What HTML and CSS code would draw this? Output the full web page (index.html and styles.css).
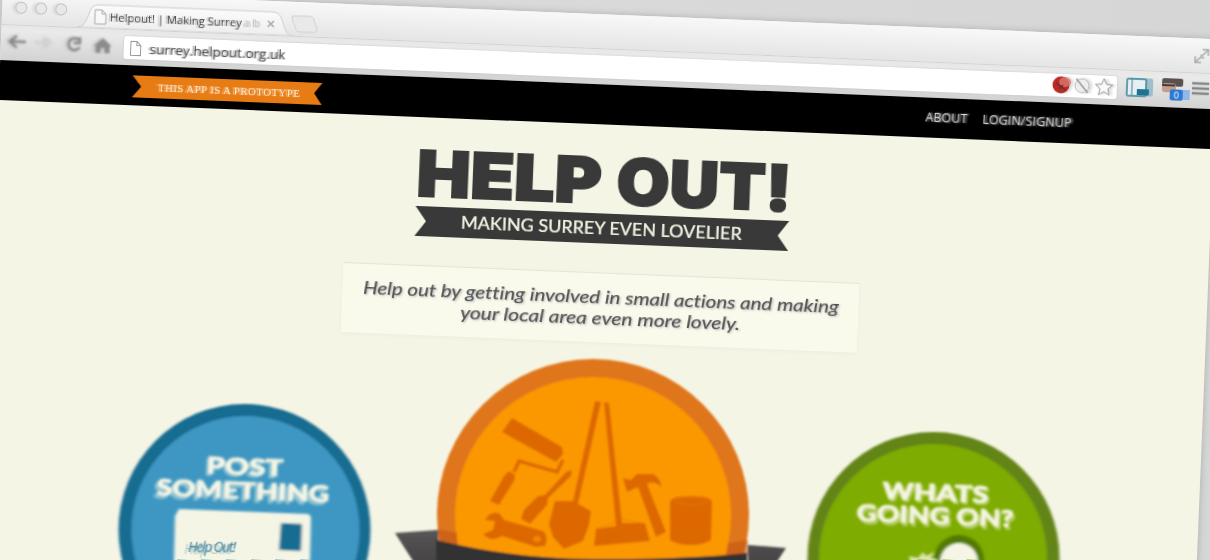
FILE: index.html
```html
<!DOCTYPE html>
<html lang="en">
<head>
<meta charset="utf-8">
<title>Helpout! | Making Surrey a better place</title>
<link rel="stylesheet" href="styles.css">
</head>
<body>
<div class="viewport">
<div class="window">
  <div class="tabs">
    <div class="lights"><i></i><i></i><i></i></div>
    <svg class="tab-shape" width="244" height="34" viewBox="0 0 244 34">
      <defs><linearGradient id="tab" x2="0" y2="1"><stop offset="0" stop-color="#fbfbfb"/><stop offset="1" stop-color="#eee"/></linearGradient></defs>
      <path d="M0 34Q6 33 8 28L13 15Q15 11 20 11H194Q200 11 203 16L208 29Q210 34 216 34Z" fill="url(#tab)" stroke="#cecece"/>
      <path d="M17 16h7l4 4v10H17zM24 16v4h4" fill="#f8f8f8" stroke="#aaa"/>
      <text class="tab-title" x="32" y="27" textLength="132">Helpout! | Making Surrey</text>
      <text class="tab-title faded" x="167" y="27" textLength="16">a b</text>
      <path d="M190 20l6 6m0-6l-6 6" stroke="#aaa" stroke-width="1.7"/>
      <path d="M216 14H232Q235 14 236 17L239 26Q240 30 236 30H222Q219 30 218 27L214 17Q213 14 216 14Z" fill="#e9e9e9" stroke="#d0d0d0"/>
    </svg>
    <svg class="expand" width="18" height="18" viewBox="0 0 18 18"><path d="M2 10v6h6M8 8v3h3M9 3h6v6M14 4L9 9M3 15l4-4" fill="none" stroke="#aaa" stroke-width="1.5"/></svg>
  </div>
  <div class="toolbar">
    <svg class="controls" width="123" height="35" viewBox="0 0 123 35">
      <g fill="none" stroke-width="2.5">
        <path d="M25 16H10M16 10l-7 6 7 6" stroke="#888"/>
        <path d="M37 16h13M45 11l6 5-6 5" stroke="#d6d6d6"/>
        <path d="M78 12a6 6 0 1 0 1 7M79 9v6h-6" stroke="#888"/>
      </g>
      <path d="M93 17l9-8 9 8h-2v7h-5v-5h-4v5h-5v-7z" fill="#8c8c8c"/>
    </svg>
    <div class="address">
      <svg width="12" height="16" viewBox="0 0 12 16"><path d="M1 1h6l4 4v10H1zM7 1v4h4" fill="#fff" stroke="#999"/></svg>
      <span class="url">surrey.helpout.org.uk</span>
      <svg class="marks" width="66" height="22" viewBox="0 0 66 22">
        <circle cx="11" cy="11" r="8.5" fill="#b92a23"/><ellipse cx="15" cy="8" rx="6" ry="5" fill="#dc756f" opacity=".8"/><path d="M6 9l10 7M9 15l4-4" stroke="#6a302c" stroke-width="1.5"/>
        <circle cx="32" cy="11" r="7" fill="#eee" stroke="#bbb"/><path d="M26 4l12 14" stroke="#999" stroke-width="1.5"/>
        <path d="M54 3l2.400 5.700 6.200.5-4.700 4 1.400 6.100L54 16l-5.300 3.300 1.400-6.100-4.700-4 6.200-.5z" fill="#fafafa" stroke="#999"/>
      </svg>
    </div>
    <svg class="extensions" width="92" height="35" viewBox="0 0 92 35">
      <rect x="11" y="7" width="25" height="18" rx="2" fill="#6fa6b8" opacity=".6"/><rect x="10" y="8" width="19" height="17" rx="1" fill="#e6f0f3" stroke="#3c8299" stroke-width="1.5"/><path d="M15 8v17" stroke="#3c8299"/><rect x="20" y="18" width="12" height="6" fill="#1e7391"/>
      <rect x="45" y="6" width="21" height="8" rx="2" fill="#5a504d"/><rect x="45" y="11" width="14" height="9" rx="3" fill="#c49e8d"/><path d="M45 13h13" stroke="#443a38" stroke-width="2"/>
      <rect x="62" y="17" width="11" height="10" fill="#8db8e8"/><rect x="53" y="17" width="13" height="11" rx="2" fill="#2b7bd3"/><text class="count" x="57" y="26">0</text>
      <path d="M75 10h17M75 15h17M75 20h17" stroke="#858585" stroke-width="2.5"/>
    </svg>
  </div>
  <header class="site-bar">
    <div class="prototype"><svg width="190" height="22" viewBox="0 0 190 22"><path d="M0 0H190L182 10.500 190 22H0L9 11Z" fill="#e77c14"/><text class="prototype-text" x="26" y="15.500" textLength="142">THIS APP IS A PROTOTYPE</text></svg></div>
    <nav class="nav"><a>ABOUT</a><a>LOGIN/SIGNUP</a></nav>
  </header>
  <main class="page">
    <h1 class="brand"><svg width="390" height="66" viewBox="0 -8 390 66"><text class="brand-text" x="2" y="47" textLength="185" lengthAdjust="spacingAndGlyphs">HELP</text><text class="brand-text" x="202" y="47" textLength="175" lengthAdjust="spacingAndGlyphs">OUT!</text></svg></h1>
    <div class="ribbon"><svg width="374" height="30" viewBox="0 0 374 30"><path d="M0 0H374L363 15 374 30H0L11 15Z" fill="#393939"/><text class="ribbon-text" x="46" y="21" textLength="281">MAKING SURREY EVEN LOVELIER</text></svg></div>
    <section class="intro">
      <svg width="517" height="69" viewBox="0 0 517 69"><text class="intro-text" x="21" y="30" textLength="476" lengthAdjust="spacingAndGlyphs">Help out by getting involved in small actions and making</text><text class="intro-text" x="119" y="51" textLength="280" lengthAdjust="spacingAndGlyphs">your local area even more lovely.</text></svg>
    </section>
    <svg class="badges" width="1215" height="244" viewBox="0 328 1215 244">
      <defs>
        <filter id="drift" x="-10%" y="-10%" width="120%" height="120%"><feGaussianBlur stdDeviation="1.8 .9"/></filter>
        <filter id="soft"><feGaussianBlur stdDeviation=".9"/></filter>
        <linearGradient id="band" x2="0" y2="1"><stop offset="0" stop-color="#575556"/><stop offset="1" stop-color="#3c3b3c"/></linearGradient>
      </defs>
      <g transform="rotate(-2.32) translate(-3 10)">
        <g filter="url(#drift)">
          <circle cx="244.500" cy="530" r="126" fill="#196c91"/><circle cx="245.500" cy="530" r="114" fill="#3c97c2"/>
          <circle cx="933.500" cy="558" r="126" fill="#638419"/><circle cx="933" cy="558" r="114" fill="#7eac00"/>
        </g>
        <g filter="url(#soft)">
          <circle cx="593" cy="515" r="156" fill="#e0761d"/><circle cx="593" cy="515" r="138" fill="#fb9802"/>
          <g fill="#dd6803">
            <path d="M512 418L562 447 563 454 556 462 502 432Z"/>
            <path d="M563 460L557 472 519 461 514 472" fill="none" stroke="#dd6803" stroke-width="3.500"/>
            <path d="M509 471L515 475 514 481 499 505 490 501 504 476Z"/>
            <path d="M572 470L571 476 548 498 547 505 530 524 521 519 524 510 538 496 545 495 566 472Z"/>
            <path d="M595 401L601 402 578 504 591 511 589 525 583 541 564 549 553 537 549 524 555 501 573 501Z"/>
            <path d="M604 402L609 403 622 523 645 523 650 541 594 546 596 529 616 526Z"/>
            <path d="M596 529L622 519 645 524" fill="none" stroke="#dd6803" stroke-width=".5"/>
            <path d="M623 478L631 480 637 474 653 474Q661 478 661 487Q654 480 647 484L666 532 656 537 638 487 627 492Z"/>
            <path d="M670 502Q671 496 691 496Q711 496 712 502L711 540Q704 545 691 545Q677 545 670 540Z"/>
            <path d="M485 520Q491 510 500 514L504 520 543 531Q549 537 545 546L536 547 502 536Q491 543 483 534L493 530 495 521Z"/>
          </g>
          <ellipse cx="691" cy="501" rx="17" ry="3.500" fill="none" stroke="#e87804" stroke-width="1"/>
          <ellipse cx="537" cy="539" rx="4" ry="3" fill="#f08706"/>
          <path d="M438 529L457 533 457 550 438 543ZM728 543L748 540 748 555 727 560Z" fill="#b94f0c" opacity=".5"/>
          <path d="M395 533L438 530 438 575H422ZM748 545L786 548 765 580H748Z" fill="url(#band)"/>
          <path d="M436 540Q515 559 593 559Q680 560 747 553L747 610H436Z" fill="#303031"/>
        </g>
        <g class="badge-copy">
          <g transform="rotate(2.32 245 480)"><text class="ghost" x="204" y="477" textLength="76" lengthAdjust="spacingAndGlyphs">POST</text><text x="206" y="475" textLength="77" lengthAdjust="spacingAndGlyphs">POST</text><text class="ghost" x="154" y="502" textLength="173" lengthAdjust="spacingAndGlyphs">SOMETHING</text><text x="157" y="499" textLength="173" lengthAdjust="spacingAndGlyphs">SOMETHING</text></g>
          <g transform="rotate(2.32 936 505)"><text x="882" y="501" textLength="106" lengthAdjust="spacingAndGlyphs">WHATS</text><text class="ghost" x="884" y="503" textLength="106" lengthAdjust="spacingAndGlyphs">WHATS</text><text x="857" y="524" textLength="157" lengthAdjust="spacingAndGlyphs">GOING ON?</text><text class="ghost" x="859" y="527" textLength="157" lengthAdjust="spacingAndGlyphs">GOING ON?</text></g>
        </g>
        <g filter="url(#drift)">
          <path d="M179 509L308 514Q311 515 311 519L309 600H173L175 516Z" fill="#f5f5e5"/>
          <path d="M281 523L302 524 301 551 279 550Z" fill="#196c91"/>
          <circle cx="959" cy="560" r="25" fill="#527900"/><circle cx="959" cy="562" r="19" fill="#f5f5e5"/>
          <path d="M909 556L918 558 923 552 926 556 934 552 931 558 938 560V570H912Z" fill="#dce4b0"/>
        </g>
        <g class="note"><text class="note-ghost" x="184" y="554" textLength="48">Help Out!</text><text x="188" y="552" textLength="48">Help Out!</text></g>
      </g>
    </svg>
  </main>
</div>
</div>
</body>
</html>
```

FILE: styles.css
```css
* { box-sizing: border-box; }
html { overflow: hidden; }
body { margin: 0; font-family: "Open Sans", sans-serif; }
svg { display: block; flex: none; }
.viewport { width: 1210px; height: 560px; overflow: hidden; background: linear-gradient(90deg, #dcdcdc, #d6d6d7); }
.window { width: 1216px; height: 572px; margin: -10px 0 0 3px; transform: rotate(2.32deg); transform-origin: 0 0; background: #f5f5e5; box-shadow: 0 0 6px 1px #b5b5b5; }
.tabs { display: flex; height: 34px; background: linear-gradient(#f8f8f8, #e5e5e5); }
.lights { display: flex; gap: 8px; width: 76px; padding: 11px 0 0 13px; }
.lights i { width: 12px; height: 12px; border: 1.5px solid #c4c4c4; border-radius: 50%; background: #e8e8e8; box-shadow: -3px 0 2px #ddd; }
.tab-shape { filter: blur(.4px); }
.tab-title { font: 11.5px "Open Sans", sans-serif; fill: #444; text-shadow: -2px 0 1px #bbb; }
.tab-title.faded { fill: #ccc; }
.expand { margin: 8px 6px 0 auto; filter: blur(.6px); }
.toolbar { display: flex; height: 36px; background: linear-gradient(#e7e7e7, #eaeaea 15%, #d2d2d2); border-top: 1px solid #d2d2d2; }
.controls { filter: drop-shadow(-3px 0 1px #c8c8c8) blur(.8px); }
.address { display: flex; align-items: center; gap: 8px; width: 994px; height: 23px; margin-top: 6px; padding-left: 6px; background: #fff; border-radius: 3px; box-shadow: 0 0 2px #bbb; }
.url { font-size: 13.5px; line-height: 20px; color: #484848; text-shadow: -2px 0 1px #aaa; filter: blur(.3px); }
.marks { margin: 0 1px 2px auto; filter: drop-shadow(3px 0 1px #ddd) blur(.6px); }
.extensions { filter: blur(.7px); }
.count { font: 9px "Open Sans", sans-serif; fill: #fff; }
.site-bar { display: flex; justify-content: space-between; height: 40px; padding: 9.5px 143px 0 133px; background: #000; }
.prototype { filter: blur(.4px); }
.prototype-text { font: 11px "Liberation Serif", serif; fill: #fff0dc; text-shadow: -2px 0 1px #f7b77b; }
.nav { display: flex; gap: 15px; padding-top: 2px; font-size: 12.300px; line-height: 16px; letter-spacing: .2px; color: #ddd; text-shadow: 2px 0 2px #aaa; filter: blur(.3px); }
.page { display: flex; flex-direction: column; }
.brand { margin: 24px 0 0 419px; filter: blur(.6px); }
.brand-text { font: 900 63px Inter, sans-serif; fill: #393939; stroke: #393939; stroke-width: 2px; }
.ribbon { margin: -1px 0 0 421px; filter: blur(.4px); }
.ribbon-text { font: 500 18px Lato, sans-serif; fill: #f0f0e0; stroke: #f0f0e0; stroke-width: .2px; }
.intro { width: 517px; height: 69px; margin: 30px 0 0 351px; background: #f9f9ec; box-shadow: 0 -1px 1px #e4e4d6, 0 2px 3px #efefe1; }
.intro-text { font: italic 400 18px Lato, sans-serif; font-variant-ligatures: none; fill: #4c4c4c; stroke: #4c4c4c; stroke-width: .15px; text-shadow: 1px 1px 2px #bbb; filter: blur(.3px); }
.badge-copy { font: 900 22.500px Lato, sans-serif; fill: #f5f5e5; stroke: #f5f5e5; stroke-width: .7px; filter: blur(.9px); }
.ghost { opacity: .45; }
.note { font: italic 14px "Open Sans", sans-serif; fill: #347c98; filter: blur(.4px); }
.note-ghost { opacity: .35; }
```
